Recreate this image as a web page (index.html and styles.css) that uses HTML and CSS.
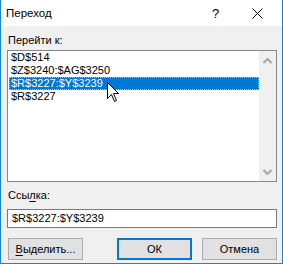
FILE: index.html
```html
<!DOCTYPE html>
<html lang="ru">
<head>
  <meta charset="UTF-8">
  <title>Переход</title>
  <link rel="stylesheet" href="styles.css">
</head>
<body>
  <div class="dialog">
    <div class="titlebar">
      <span class="title">Переход</span>
      <span class="help">?</span>
      <span class="close">
        <svg width="11" height="11" viewBox="0 0 11 11"><path d="M0.5 0.5 L10.5 10.5 M10.5 0.5 L0.5 10.5" stroke="#000" stroke-width="1" fill="none"/></svg>
      </span>
    </div>

    <div class="content">
      <div class="label">Перейти к:</div>
      <div class="listbox">
        <ul class="items">
          <li>$D$514</li>
          <li>$Z$3240:$AG$3250</li>
          <li class="selected">$R$3227:$Y$3239</li>
          <li>$R$3227</li>
        </ul>
        <div class="scrollbar">
          <svg width="9" height="6" viewBox="0 0 9 6"><path d="M0.5 5 L4.5 1 L8.5 5" stroke="#a6a6a6" stroke-width="2" fill="none"/></svg>
          <svg width="9" height="6" viewBox="0 0 9 6"><path d="M0.5 1 L4.5 5 L8.5 1" stroke="#a6a6a6" stroke-width="2" fill="none"/></svg>
        </div>
      </div>

      <div class="label label-ref">Ссы<u>л</u>ка:</div>
      <div class="refbox">$R$3227:$Y$3239</div>

      <div class="buttons">
        <button class="btn"><u>В</u>ыделить...</button>
        <span class="spacer"></span>
        <button class="btn btn-default">ОК</button>
        <button class="btn">Отмена</button>
      </div>
    </div>

    <!-- mouse pointer over the list -->
    <svg class="cursor" width="13" height="21" viewBox="0 0 13 21">
      <path d="M0.5 0.5 L0.5 16.5 L4.5 12.5 L7.5 19.5 L9.5 18.5 L6.5 11.5 L11.5 11.5 Z" fill="#fff" stroke="#000" stroke-width="1"/>
    </svg>
  </div>
</body>
</html>
```

FILE: styles.css
```css
* {
  box-sizing: border-box;
}
body {
  margin: 0;
  font-family: "Liberation Sans", Arial, sans-serif;
  font-size: 11px;
  color: #000;
}
.dialog {
  position: relative;
  width: 283px;
  height: 264px;
  background-color: #f0f0f0;
  border: 1px solid #1883d7;
  border-top: none;
  display: flex;
  flex-direction: column;
}
.titlebar {
  height: 26px;
  background-color: #fff;
  display: flex;
  align-items: center;
  padding-left: 5px;
}
.title {
  flex: 1;
  font-size: 11.5px;
}
.help {
  font-size: 13px;
  width: 41px;
  padding-left: 1px;
}
.close {
  width: 30px;
  display: flex;
  padding-top: 1px;
}
.content {
  flex: 1;
  padding: 7px 5px 0 6px;
  display: flex;
  flex-direction: column;
}
.label {
  line-height: 15px;
  padding-left: 1px;
  margin-bottom: 2px;
}
.label u {
  text-decoration-thickness: 1px;
  text-underline-offset: 2px;
}
.listbox {
  height: 132px;
  background-color: #fff;
  border: 1px solid #828790;
  display: flex;
}
.items {
  flex: 1;
  list-style: none;
  margin: 0;
  padding: 0 0 0 1px;
}
.items li {
  height: 13px;
  line-height: 13px;
  padding-left: 2px;
  white-space: nowrap;
}
.items li.selected {
  background-color: #0078d7;
  color: #fff;
  outline: 1px dotted #f3b35e;
  outline-offset: -1px;
}
.scrollbar {
  width: 17px;
  background-color: #f0f0f0;
  display: flex;
  flex-direction: column;
  justify-content: space-between;
  align-items: center;
  padding: 7px 0 6px 0;
}
.label-ref {
  margin-top: 6px;
  margin-bottom: 6px;
}
.refbox {
  height: 19px;
  background-color: #fff;
  border: 1px solid #7a7a7a;
  line-height: 17px;
  padding-left: 4px;
}
.buttons {
  display: flex;
  margin-top: 10px;
  gap: 10px;
  padding-left: 1px;
}
.spacer {
  flex: 1;
}
.btn {
  width: 75px;
  height: 22px;
  background-color: #e1e1e1;
  border: 1px solid #adadad;
  font-family: inherit;
  font-size: 11px;
  color: #000;
  padding: 0;
}
.btn u {
  text-underline-offset: 2px;
}
.btn-default {
  border: 2px solid #0078d7;
}
.cursor {
  position: absolute;
  left: 106px;
  top: 82px;
}
```
